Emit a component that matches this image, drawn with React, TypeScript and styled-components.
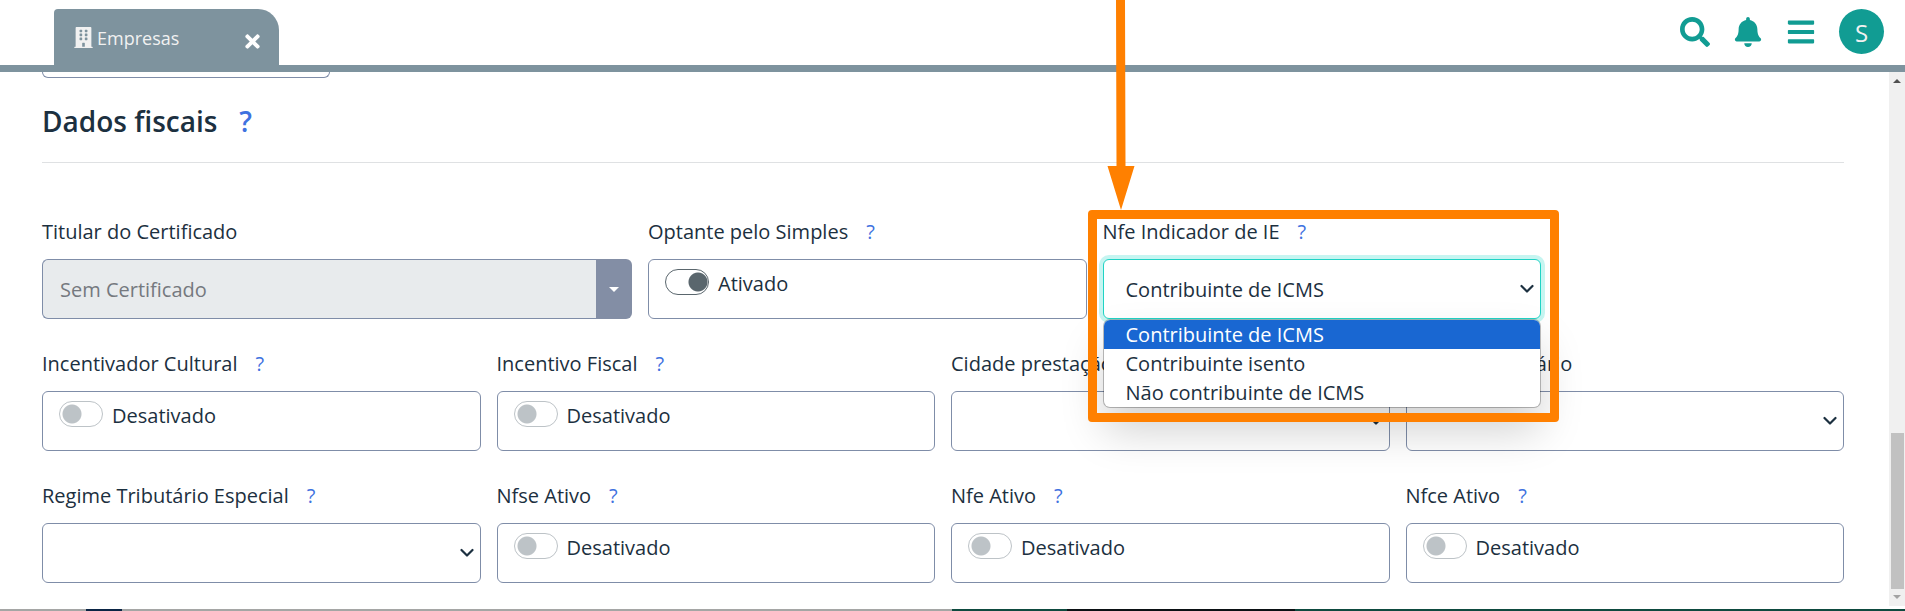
import React, { useId, useState } from 'react';
import styled, { createGlobalStyle, css } from 'styled-components';
import { FaBars, FaBell, FaBuilding, FaSearch, FaTimes } from 'react-icons/fa';

const color = {
  ink: '#1c3040',
  border: '#7f8da8',
  slate: '#7e939e',
  teal: '#119c93',
  link: '#3f72e0',
  focus: '#20d3c5',
  mark: '#ff8000',
};

const GlobalStyle = createGlobalStyle`
  *, *::before, *::after { box-sizing: border-box; }
  body {
    margin: 0;
    background: #fff;
    color: ${color.ink};
    font-family: "Open Sans", "Noto Sans", sans-serif;
    font-size: 20px;
    line-height: 30px;
  }
  button, input, select { font: inherit; color: inherit; }
`;

const Page = styled.div`
  display: flex;
  flex-direction: column;
  min-height: 100vh;
`;

const Header = styled.header`
  display: flex;
  justify-content: space-between;
  padding: 9px 21px 0 54px;
  border-bottom: 7px solid ${color.slate};
`;

const Tab = styled.div`
  display: flex;
  align-items: center;
  justify-content: space-between;
  width: 225px;
  height: 56px;
  padding: 0 16px 0 20px;
  border-radius: 4px 21px 0 0;
  background: ${color.slate};
  color: #f1f1f1;
`;

const TabLink = styled.a`
  display: flex;
  align-items: center;
  gap: 4px;
  padding-top: 2px;
  color: inherit;
  font-size: 18px;
  text-decoration: none;
  svg { width: 19px; height: 21px; margin-bottom: 2px; }
`;

const CloseButton = styled.button`
  display: flex;
  padding: 8px 0 0;
  border: 0;
  background: none;
  color: #fff;
  font-size: 21px;
`;

const Tools = styled.nav`
  display: flex;
  align-items: center;
  gap: 23px;
  height: 45px;
`;

const ToolButton = styled.button`
  display: flex;
  padding: 0;
  border: 0;
  background: none;
  color: ${color.teal};
  font-size: 30px;
`;

const Avatar = styled.button`
  width: 45px;
  height: 45px;
  padding: 2px 0 0;
  border: 0;
  border-radius: 50%;
  background: ${color.teal};
  color: #f1f1f1;
  font-size: 24px;
`;

const Body = styled.div`
  display: flex;
  flex: 1;
`;

const Content = styled.main`
  flex: 1;
  min-width: 0;
  padding: 0 45px 25px 42px;
`;

const PreviousField = styled.div`
  width: 16%;
  height: 6px;
  border: 1px solid ${color.border};
  border-top: 0;
  border-radius: 0 0 6px 6px;
`;

const SectionTitle = styled.h2`
  display: flex;
  gap: 22px;
  margin: 23px 0 54px;
  padding-bottom: 21px;
  border-bottom: 1px solid #dfe1e3;
  font-size: 28px;
  font-weight: 600;
  line-height: 40px;
`;

const HelpLink = styled.a`
  color: ${color.link};
  text-decoration: none;
`;

const Grid = styled.div`
  display: grid;
  grid-template-columns: repeat(12, minmax(0, 1fr));
  gap: 30px 16px;
  & + & { margin-top: 30px; }
`;

const Cell = styled.div<{ $span: number }>`
  position: relative;
  grid-column: span ${(p) => p.$span};
`;

const LabelRow = styled.div`
  display: flex;
  gap: 18px;
  margin-bottom: 12px;
  white-space: nowrap;
`;

const Control = styled.div`
  position: relative;
  display: flex;
  height: 60px;
`;

const SelectBox = styled.select<{ $focused?: boolean }>`
  width: 100%;
  padding: 2px 48px 0 22px;
  appearance: none;
  border: 1px solid ${color.border};
  border-radius: 6px;
  background: #fff;
  outline: 0;
  ${(p) => p.$focused && css`
    border-color: ${color.focus};
    box-shadow: 0 0 0 4px #c6f5f1;
  `}
`;

const Chevron = styled.svg`
  position: absolute;
  top: 25px;
  right: 7px;
  width: 14px;
  height: 10px;
  pointer-events: none;
`;

const SwitchBox = styled.label`
  display: flex;
  align-items: flex-start;
  gap: 9px;
  width: 100%;
  padding: 9px 16px;
  border: 1px solid ${color.border};
  border-radius: 6px;
`;

const Switch = styled.input`
  width: 44px;
  height: 26px;
  margin: 0;
  appearance: none;
  border: 1px solid #bdc3c7;
  border-radius: 13px;
  background: radial-gradient(circle at 12px 12px, #bdc3c7 9px, transparent 10px);
  &:checked {
    border-color: #5a666d;
    background: radial-gradient(circle at 32px 12px, #5a666d 9px, transparent 10px);
  }
`;

const DisabledInput = styled.input`
  flex: 1;
  min-width: 0;
  padding: 2px 17px 0;
  border: 1px solid ${color.border};
  border-right: 0;
  border-radius: 6px 0 0 6px;
  background: #e8ebed;
  color: #75797f;
`;

const CaretButton = styled.button`
  display: flex;
  align-items: center;
  justify-content: center;
  width: 36px;
  padding: 0;
  border: 0;
  border-radius: 0 6px 6px 0;
  background: #838ea5;
  svg { width: 10px; height: 5px; }
`;

const Menu = styled.ul`
  position: absolute;
  z-index: 2;
  top: 61px;
  left: 1px;
  right: 1px;
  margin: 0;
  padding: 0;
  overflow: hidden;
  border-radius: 6px;
  background: #fff;
  box-shadow: 0 0 0 1px rgba(0, 0, 0, 0.25), 0 24px 44px rgba(0, 0, 0, 0.18);
  list-style: none;
`;

const Option = styled.li<{ $active: boolean }>`
  padding: 1px 22px 0;
  line-height: 28px;
  ${(p) => p.$active && css`background: #1967d2; color: #fff;`}
`;

const Highlight = styled.div`
  position: absolute;
  z-index: 3;
  inset: -7px -18px -103px -15px;
  border: 9px solid ${color.mark};
  border-radius: 4px;
  pointer-events: none;
`;

const Arrow = styled.svg`
  position: absolute;
  z-index: 3;
  bottom: calc(100% + 7px);
  left: 4px;
  width: 28px;
  height: 210px;
  pointer-events: none;
`;

const Scrollbar = styled.div`
  display: flex;
  flex-direction: column;
  align-items: center;
  justify-content: space-between;
  width: 16px;
  margin-bottom: 3px;
  padding: 7px 0;
  background: #f0f0f0;
  svg { width: 8px; height: 4px; }
`;

const Thumb = styled.div`
  width: 13px;
  height: 156px;
  margin: auto 0 6px;
  background: #c1c1c1;
`;

const Backdrop = styled.footer`
  height: 2px;
  background: linear-gradient(90deg, #a5a6a5 86px, #0b2545 86px 122px, #a5a6a5 122px 50%, #0e4a3f 50% 56%, #0b1114 56% 68%, #0e4a3f 68%);
`;

function Help() {
  return <HelpLink href="#ajuda" aria-label="Ajuda">?</HelpLink>;
}

interface FieldProps {
  label: string;
  span?: number;
  help?: boolean;
  overlay?: React.ReactNode;
  children: (id: string) => React.ReactNode;
}

function Field({ label, span = 3, help = true, overlay, children }: FieldProps) {
  const id = useId();
  return (
    <Cell $span={span}>
      <LabelRow>
        <label htmlFor={id}>{label}</label>
        {help && <Help />}
      </LabelRow>
      <Control>{children(id)}</Control>
      {overlay}
    </Cell>
  );
}

function SelectControl({ id, options = [''], focused }: { id: string; options?: string[]; focused?: boolean }) {
  return (
    <>
      <SelectBox id={id} $focused={focused}>
        {options.map((o) => <option key={o}>{o}</option>)}
      </SelectBox>
      <Chevron viewBox="0 0 14 10" fill="none" stroke={color.ink} strokeWidth="2.2" strokeLinecap="round" strokeLinejoin="round">
        <path d="M1.5 2 7 7.5 12.5 2" />
      </Chevron>
    </>
  );
}

function SwitchControl({ id, initial = false }: { id: string; initial?: boolean }) {
  const [on, setOn] = useState(initial);
  return (
    <SwitchBox>
      <Switch id={id} type="checkbox" role="switch" checked={on} onChange={() => setOn(!on)} />
      {on ? 'Ativado' : 'Desativado'}
    </SwitchBox>
  );
}

const indicators = ['Contribuinte de ICMS', 'Contribuinte isento', 'Não contribuinte de ICMS'];

export default function App() {
  return (
    <Page>
      <GlobalStyle />
      <Header>
        <Tab>
          <TabLink href="#empresas"><FaBuilding />Empresas</TabLink>
          <CloseButton aria-label="Fechar"><FaTimes /></CloseButton>
        </Tab>
        <Tools>
          <ToolButton aria-label="Buscar"><FaSearch /></ToolButton>
          <ToolButton aria-label="Notificações"><FaBell /></ToolButton>
          <ToolButton aria-label="Menu"><FaBars /></ToolButton>
          <Avatar>S</Avatar>
        </Tools>
      </Header>
      <Body>
        <Content>
          <PreviousField />
          <SectionTitle>Dados fiscais <Help /></SectionTitle>
          <Grid>
            <Field label="Titular do Certificado" span={4} help={false}>
              {(id) => (
                <>
                  <DisabledInput id={id} value="Sem Certificado" disabled />
                  <CaretButton disabled aria-label="Abrir lista">
                    <svg viewBox="0 0 10 5" fill="#fff"><path d="M0 0h10L5 5z" /></svg>
                  </CaretButton>
                </>
              )}
            </Field>
            <Field label="Optante pelo Simples">{(id) => <SwitchControl id={id} initial />}</Field>
            <Field
              label="Nfe Indicador de IE"
              overlay={
                <>
                  <Highlight />
                  <Arrow viewBox="0 0 28 210" fill={color.mark}>
                    <path d="M9 0h9l.5 166h9L14 210 .5 166h9z" />
                  </Arrow>
                </>
              }
            >
              {(id) => (
                <>
                  <SelectControl id={id} options={indicators} focused />
                  <Menu role="listbox" aria-label="Nfe Indicador de IE">
                    {indicators.map((o, i) => (
                      <Option key={o} role="option" aria-selected={i === 0} $active={i === 0}>{o}</Option>
                    ))}
                  </Menu>
                </>
              )}
            </Field>
          </Grid>
          <Grid>
            <Field label="Incentivador Cultural">{(id) => <SwitchControl id={id} />}</Field>
            <Field label="Incentivo Fiscal">{(id) => <SwitchControl id={id} />}</Field>
            <Field label="Cidade prestação" help={false}>{(id) => <SelectControl id={id} />}</Field>
            <Field label="Regime Tributário" help={false}>{(id) => <SelectControl id={id} />}</Field>
            <Field label="Regime Tributário Especial">{(id) => <SelectControl id={id} />}</Field>
            <Field label="Nfse Ativo">{(id) => <SwitchControl id={id} />}</Field>
            <Field label="Nfe Ativo">{(id) => <SwitchControl id={id} />}</Field>
            <Field label="Nfce Ativo">{(id) => <SwitchControl id={id} />}</Field>
          </Grid>
        </Content>
        <Scrollbar aria-hidden="true">
          <svg viewBox="0 0 8 4" fill="#505050"><path d="M0 4h8L4 0z" /></svg>
          <Thumb />
          <svg viewBox="0 0 8 4" fill="#a3a3a3"><path d="M0 0h8L4 4z" /></svg>
        </Scrollbar>
      </Body>
      <Backdrop />
    </Page>
  );
}
